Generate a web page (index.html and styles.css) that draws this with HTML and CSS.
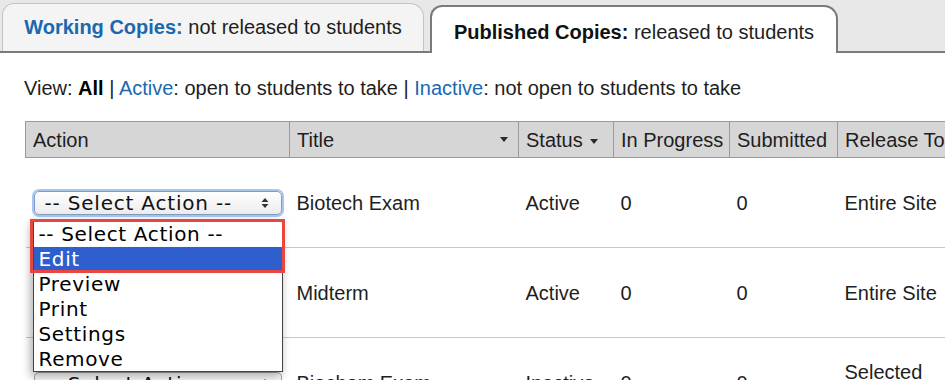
FILE: index.html
```html
<!DOCTYPE html>
<html lang="en">
<head>
    <meta charset="UTF-8">
    <title>Assessments</title>
    <link rel="stylesheet" href="styles.css">
</head>
<body>
    <div class="tabs">
        <div class="tab">
            <span class="tab-label blue">Working Copies:</span> not released to students
        </div>
        <div class="tab active">
            <span class="tab-label">Published Copies:</span> released to students
        </div>
    </div>

    <p class="view">
        View: <b>All</b> | <a href="#">Active</a>: open to students to take | <a href="#">Inactive</a>: not open to students to take
    </p>

    <table class="assess">
        <colgroup>
            <col class="c-action"><col class="c-title"><col class="c-status">
            <col class="c-prog"><col class="c-sub"><col class="c-rel">
        </colgroup>
        <thead>
            <tr>
                <th>Action</th>
                <th>Title <span class="sort right"></span></th>
                <th>Status<span class="sort"></span></th>
                <th>In Progress</th>
                <th>Submitted</th>
                <th class="nowrap">Release To<span class="sort"></span></th>
            </tr>
        </thead>
        <tbody>
            <tr>
                <td>
                    <div class="select-wrap">
                        <div class="select focus">-- Select Action --<span class="arrows"><svg width="8" height="12" viewBox="0 0 8 12"><path d="M4 1 L7.5 5 H0.5 Z M4 11 L7.5 7 H0.5 Z" fill="#333"/></svg></span></div>
                        <ul class="menu">
                            <li>-- Select Action --</li>
                            <li class="hl">Edit</li>
                            <li>Preview</li>
                            <li>Print</li>
                            <li>Settings</li>
                            <li>Remove</li>
                        </ul>
                        <div class="callout"></div>
                    </div>
                </td>
                <td>Biotech Exam</td>
                <td>Active</td>
                <td>0</td>
                <td>0</td>
                <td>Entire Site</td>
            </tr>
            <tr>
                <td>
                    <div class="select">-- Select Action --<span class="arrows"><svg width="8" height="12" viewBox="0 0 8 12"><path d="M4 1 L7.5 5 H0.5 Z M4 11 L7.5 7 H0.5 Z" fill="#333"/></svg></span></div>
                </td>
                <td>Midterm</td>
                <td>Active</td>
                <td>0</td>
                <td>0</td>
                <td>Entire Site</td>
            </tr>
            <tr>
                <td>
                    <div class="select">-- Select Action --<span class="arrows"><svg width="8" height="12" viewBox="0 0 8 12"><path d="M4 1 L7.5 5 H0.5 Z M4 11 L7.5 7 H0.5 Z" fill="#333"/></svg></span></div>
                </td>
                <td>Biochem Exam</td>
                <td>Inactive</td>
                <td>0</td>
                <td>0</td>
                <td>Selected<br>Groups</td>
            </tr>
        </tbody>
    </table>
</body>
</html>
```

FILE: styles.css
```css
body {
    margin: 0;
    font-family: "Liberation Sans", Arial, sans-serif;
    font-size: 20px;
    color: #1e1e1e;
    background: #fff;
    overflow: hidden;
}

.tabs {
    display: flex;
    align-items: flex-end;
    height: 51px;
    background: #e8e8e8;
    border-bottom: 2px solid #7a7a7a;
    padding-left: 2px;
}
.tab {
    box-sizing: border-box;
    width: 422px;
    height: 48px;
    padding-top: 12px;
    text-align: center;
    background: #f4f4f4;
    border: 1px solid #c4c4c4;
    border-bottom: none;
    border-radius: 12px 14px 0 0;
    white-space: nowrap;
}
.tab.active {
    width: 408px;
    margin-left: 6px;
    margin-bottom: -2px;
    padding-top: 14px;
    background: #fff;
    border: 2px solid #7a7a7a;
    border-bottom: none;
}
.tab-label {
    font-weight: bold;
    color: #111;
}
.tab-label.blue {
    color: #1b68b0;
}

.view {
    margin: 23px 0 21px;
    padding-left: 24px;
    line-height: 24px;
}
.view a {
    color: #1b68b0;
    text-decoration: none;
}
.view b {
    color: #000;
}

.assess {
    margin-left: 25px;
    border-collapse: collapse;
    table-layout: fixed;
    width: 1020px;
}
.c-action { width: 264px; }
.c-title { width: 229px; }
.c-status { width: 95px; }
.c-prog { width: 116px; }
.c-sub { width: 108px; }
.c-rel { width: 208px; }

.assess th {
    height: 33px;
    padding: 2px 7px 0;
    background: #d6d6d6;
    border: 1px solid #9a9a9a;
    font-weight: normal;
    text-align: left;
    white-space: nowrap;
    overflow: hidden;
}
.assess td {
    height: 87px;
    padding: 2px 7px 0;
    border-bottom: 1px solid #c8c8c8;
    line-height: 23px;
    vertical-align: middle;
}
.sort {
    display: inline-block;
    width: 0;
    height: 0;
    margin-left: 7px;
    vertical-align: middle;
    border-left: 4.5px solid transparent;
    border-right: 4.5px solid transparent;
    border-top: 5px solid #2a2a2a;
}
.sort.right {
    float: right;
    margin: 8px 3px 0 0;
}

.select-wrap {
    position: relative;
    top: -1px;
}
.select {
    position: relative;
    box-sizing: border-box;
    width: 248px;
    height: 24px;
    margin-left: 1px;
    padding-left: 10px;
    font-family: "DejaVu Sans", sans-serif;
    font-size: 20px;
    letter-spacing: 0.8px;
    line-height: 22px;
    color: #111;
    background: linear-gradient(#fff, #ececec);
    border: 1px solid #a4a4a4;
    border-radius: 5px;
    white-space: nowrap;
}
.select.focus {
    border-color: #7f9cc8;
    box-shadow: 0 0 0 2px #a9c6ee;
}
.arrows {
    position: absolute;
    right: 12px;
    top: 5px;
    line-height: 0;
}

.menu {
    position: absolute;
    z-index: 2;
    top: 28px;
    left: 0;
    width: 250px;
    height: 153px;
    box-sizing: border-box;
    margin: 0;
    padding: 2px 0 0;
    list-style: none;
    background: #fff;
    border: 1px solid #444;
    box-shadow: -2px 4px 9px rgba(0, 0, 0, 0.35);
    font-family: "DejaVu Sans", sans-serif;
    font-size: 20px;
    letter-spacing: 0.65px;
    color: #000;
}
.menu li {
    height: 25px;
    line-height: 25px;
    padding-left: 5px;
    white-space: nowrap;
}
.menu li.hl {
    background: #2f5fce;
    color: #fff;
}
.callout {
    position: absolute;
    z-index: 3;
    top: 28px;
    left: -3px;
    width: 249px;
    height: 48px;
    border: 3px solid #e8463e;
}
.nowrap {
    white-space: nowrap;
}
```
